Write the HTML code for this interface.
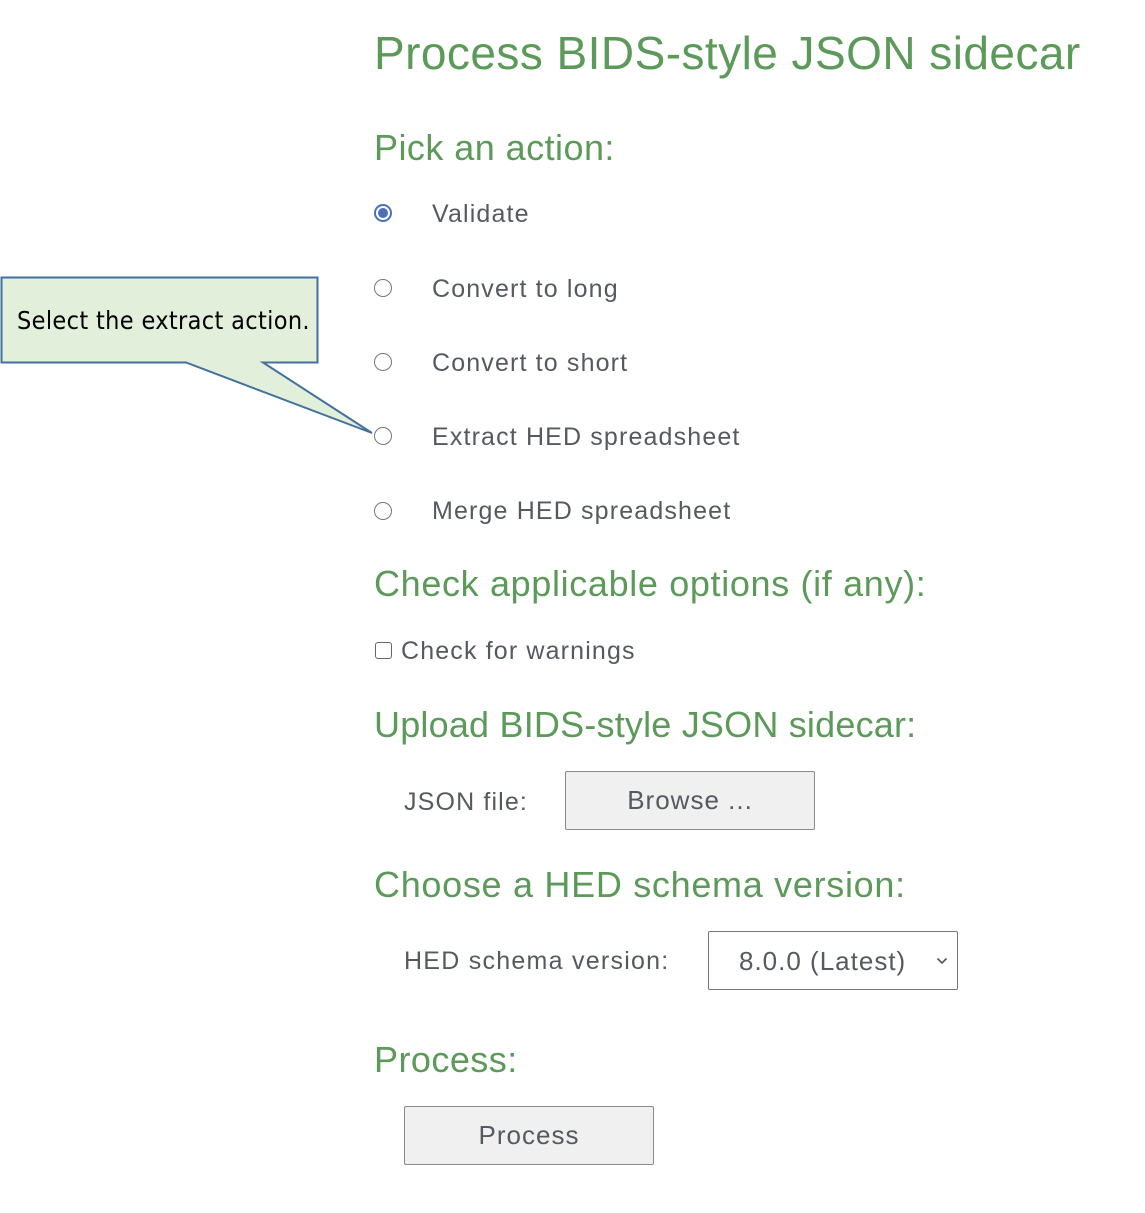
<!DOCTYPE html>
<html><head><meta charset="utf-8"><style>
body{margin:0;width:1145px;height:1213px;background:#fff;position:relative;font-family:"Liberation Sans",Arial,sans-serif;overflow:hidden}
.a{position:absolute;white-space:nowrap;line-height:1}
.g{color:#5b9a58;letter-spacing:0.45px}
.t{color:#555a60;font-size:25px;letter-spacing:1.15px}
.r{position:absolute;width:18px;height:18px;border:1.3px solid #767676;border-radius:50%;box-sizing:border-box;background:#fff}
.btn{position:absolute;background:#f0f0f0;border:1px solid #8a8a8a;border-radius:2px;box-sizing:border-box;color:#555a60;font-size:26px;text-align:center;letter-spacing:1px}
</style></head><body>
<div class="a g" style="left:374px;top:30px;font-size:46px">Process BIDS-style JSON sidecar</div>
<div class="a g" style="left:374px;top:130px;font-size:36px">Pick an action:</div>

<div class="r" style="left:374px;top:204px;border:2px solid #4a6fbd;"><div style="position:absolute;left:2px;top:2px;width:10px;height:10px;border-radius:50%;background:#4a6fbd"></div></div>
<div class="a t" style="left:432px;top:202px">Validate</div>
<div class="r" style="left:374px;top:279px"></div>
<div class="a t" style="left:432px;top:277px">Convert to long</div>
<div class="r" style="left:374px;top:353px"></div>
<div class="a t" style="left:432px;top:351px">Convert to short</div>
<div class="r" style="left:374px;top:427px"></div>
<div class="a t" style="left:432px;top:425px">Extract HED spreadsheet</div>
<div class="r" style="left:374px;top:502px"></div>
<div class="a t" style="left:432px;top:499px">Merge HED spreadsheet</div>

<div class="a g" style="left:374px;top:566px;font-size:36px;letter-spacing:0.65px">Check applicable options (if any):</div>
<div style="position:absolute;left:375px;top:642px;width:17px;height:17px;border:1.5px solid #666;border-radius:3px;box-sizing:border-box"></div>
<div class="a t" style="left:401px;top:639px">Check for warnings</div>

<div class="a g" style="left:374px;top:707px;font-size:36px;letter-spacing:0.2px">Upload BIDS-style JSON sidecar:</div>
<div class="a t" style="left:404px;top:790px">JSON file:</div>
<div class="btn" style="left:565px;top:771px;width:250px;height:59px;line-height:57px">Browse ...</div>

<div class="a g" style="left:374px;top:867px;font-size:36px;letter-spacing:0.7px">Choose a HED schema version:</div>
<div class="a t" style="left:404px;top:949px;letter-spacing:1.25px">HED schema version:</div>
<div style="position:absolute;left:708px;top:931px;width:250px;height:59px;border:1px solid #767676;border-radius:2px;box-sizing:border-box;background:#fff">
<div class="a t" style="left:30px;top:16px;font-size:26px;letter-spacing:1px">8.0.0 (Latest)</div>
<svg style="position:absolute;left:227px;top:25px" width="12" height="8" viewBox="0 0 12 8"><path d="M1.5 1.5 L6 6 L10.5 1.5" fill="none" stroke="#555" stroke-width="1.6"/></svg>
</div>

<div class="a g" style="left:374px;top:1042px;font-size:36px">Process:</div>
<div class="btn" style="left:404px;top:1106px;width:250px;height:59px;line-height:57px">Process</div>

<svg style="position:absolute;left:0;top:0" width="380" height="440">
<path d="M1.5 277.5 H317.5 V362.5 H263 L372 433 L186 362.5 H1.5 Z" fill="#e2efda" stroke="#41719c" stroke-width="2"/>
</svg>
<div class="a" style="left:17px;top:308px;font-size:25px;color:#000;font-family:'DejaVu Sans Condensed','Liberation Sans',sans-serif;letter-spacing:0.35px">Select the extract action.</div>
</body></html>
